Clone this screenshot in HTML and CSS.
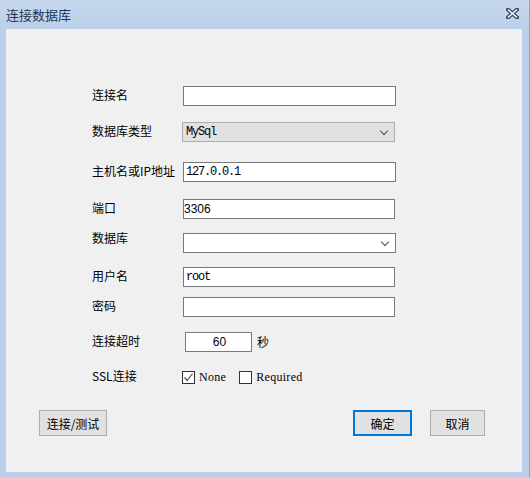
FILE: index.html
```html
<!DOCTYPE html>
<html lang="zh">
<head>
<meta charset="utf-8">
<title>连接数据库</title>
<link rel="stylesheet" href="styles.css">
</head>
<body>
<div class="window">
  <div class="titlebar">
    <span class="title">连接数据库</span>
    <svg class="close" width="13" height="11" viewBox="0 0 13 11">
      <path d="M2 1.5 L11 9.5 M11 1.5 L2 9.5" stroke="#3d4a5e" stroke-width="4" stroke-linecap="square" fill="none"/>
      <path d="M2 1.5 L11 9.5 M11 1.5 L2 9.5" stroke="#f4f6fa" stroke-width="1.6" fill="none"/>
    </svg>
  </div>
  <div class="panel">
    <div class="form">
      <div class="row r-name"><span class="label">连接名</span><div class="input w213"></div></div>
      <div class="row r-type"><span class="label">数据库类型</span><div class="combo grey w213"><span class="mono">MySql</span><span class="chev"></span></div></div>
      <div class="row r-host"><span class="label">主机名或IP地址</span><div class="input w213"><span class="mono">127.0.0.1</span></div></div>
      <div class="row r-port"><span class="label">端口</span><div class="input w212 port"><span class="sans">3306</span></div></div>
      <div class="row r-db"><span class="label up">数据库</span><div class="combo white w213"><span></span><span class="chev"></span></div></div>
      <div class="row r-user"><span class="label">用户名</span><div class="input w212"><span class="mono">root</span></div></div>
      <div class="row r-pwd"><span class="label">密码</span><div class="input w212"></div></div>
      <div class="row r-timeout"><span class="label">连接超时</span><div class="input w67 center"><span class="sans">60</span></div><span class="unit">秒</span></div>
      <div class="row r-ssl"><span class="label">SSL连接</span>
        <span class="check checked"><svg width="11" height="11" viewBox="0 0 11 11"><path d="M1.5 5.5 L4.2 8.5 L9.5 1.5" stroke="#555" stroke-width="1.2" fill="none"/></svg></span><span class="serif opt">None</span>
        <span class="check second"></span><span class="serif opt">Required</span>
      </div>
    </div>
    <div class="buttons">
      <button class="btn test">连接/测试</button>
      <div class="spacer"></div>
      <button class="btn ok">确定</button>
      <button class="btn cancel">取消</button>
    </div>
  </div>
</div>
</body>
</html>
```

FILE: styles.css
```css
* { box-sizing: border-box; }
html, body { margin: 0; padding: 0; }
body {
  width: 530px;
  height: 477px;
  overflow: hidden;
  background: #b9cfe8;
  font-family: "Noto Sans CJK SC", "Liberation Sans", sans-serif;
  font-size: 12px;
  color: #000;
}
.window {
  width: 530px;
  height: 477px;
  display: flex;
  flex-direction: column;
  background: #bad0e9;
  border-right: 1px solid #8ea6c4;
}
.titlebar {
  height: 29px;
  display: flex;
  align-items: center;
  padding-left: 6px;
  padding-right: 10px;
  background: linear-gradient(#c6d8ee, #bbd0e9);
}
.title {
  font-size: 13px;
  color: #1e3556;
  flex: 1;
  margin-top: -1px;
}
.close { margin-top: -2px; }
.panel {
  margin: 0 7px 0 6px;
  height: 443px;
  background: #f0f0f0;
  padding: 57px 0 0 86px;
}
.form { display: flex; flex-direction: column; }
.row {
  display: flex;
  align-items: center;
  height: 20px;
}
.label {
  width: 91px;
  flex: none;
  line-height: 14px;
  margin-top: -2px;
  white-space: nowrap;
}
.label.up { margin-top: -10px; }
.r-type { margin-top: 16px; }
.r-host { margin-top: 20px; }
.r-port { margin-top: 17px; }
.r-db { margin-top: 14px; }
.r-user { margin-top: 14px; }
.r-pwd { margin-top: 10px; }
.r-timeout { margin-top: 15px; }
.r-ssl { margin-top: 15px; }
.input {
  height: 20px;
  background: #fff;
  border: 1px solid #7a7a7a;
  display: flex;
  align-items: center;
  padding-left: 2px;
}
.input.port { padding-left: 0; }
.input.center { justify-content: center; margin-left: 2px; }
.w213 { width: 213px; }
.w212 { width: 212px; }
.w67 { width: 67px; }
.mono {
  font-family: "Liberation Mono", "DejaVu Sans Mono", monospace;
  font-size: 12px;
  letter-spacing: -1.2px;
  line-height: 14px;
}
.serif {
  font-family: "Liberation Serif", serif;
  font-size: 12px;
  line-height: 14px;
  letter-spacing: 0.3px;
}
.sans {
  font-family: "Liberation Sans", "Noto Sans", sans-serif;
  font-size: 12px;
  line-height: 14px;
}
.combo {
  height: 20px;
  display: flex;
  align-items: center;
  justify-content: space-between;
  padding: 0 7px 0 3px;
}
.combo.grey { background: #e1e1e1; border: 1px solid #adadad; margin-left: -1px; }
.combo.white { background: #fff; border: 1px solid #7a7a7a; }
.chev {
  width: 6px;
  height: 6px;
  border-right: 1px solid #505050;
  border-bottom: 1px solid #505050;
  transform: rotate(45deg);
  margin-top: -3px;
}
.unit { margin-left: 5px; margin-top: -2px; }
.check {
  width: 13px;
  height: 13px;
  border: 1px solid #333;
  background: #fff;
  display: flex;
  align-items: center;
  justify-content: center;
  margin-left: -1px;
}
.check.second { margin-left: 13px; }
.opt { margin-left: 4px; }
.buttons {
  display: flex;
  margin-top: 23px;
  margin-left: -53px;
  padding-right: 37px;
}
.spacer { flex: 1; }
.btn {
  height: 26px;
  background: #e1e1e1;
  border: 1px solid #adadad;
  font-family: "Noto Sans CJK SC", sans-serif;
  font-size: 12px;
  padding: 0;
  color: #000;
}
.btn.test { width: 68px; }
.btn.ok { width: 59px; border: 2px solid #0078d7; }
.btn.cancel { width: 55px; margin-left: 18px; }
```
